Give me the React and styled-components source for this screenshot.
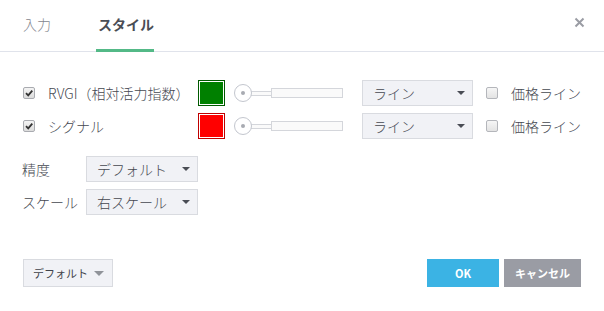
import React from "react";
import styled, { createGlobalStyle } from "styled-components";

const Global = createGlobalStyle`
  html, body { margin: 0; padding: 0; background: #fff; }
  body { font-family: "Noto Sans CJK JP", "Noto Sans", sans-serif; color: #454850; font-weight: 300; }
  * { box-sizing: border-box; }
`;

const Dialog = styled.div`
  width: 604px;
  height: 311px;
  display: flex;
  flex-direction: column;
  background: #fff;
`;

const Header = styled.div`
  height: 52px;
  border-bottom: 1px solid #e0e3eb;
  display: flex;
  align-items: stretch;
  padding: 0 19px 0 23px;
`;

const Tab = styled.div`
  font-size: 14px;
  font-weight: ${(p) => (p.$active ? 700 : 300)};
  color: ${(p) => (p.$active ? "#4a4d55" : "#83868e")};
  margin-right: 47px;
  display: flex;
  align-items: center;
  padding-bottom: 3px;
  position: relative;
  &::after {
    content: "";
    display: ${(p) => (p.$active ? "block" : "none")};
    position: absolute;
    left: -2px;
    right: 0;
    bottom: -1px;
    height: 3px;
    background: #53b987;
  }
`;

const Close = styled.button`
  margin-left: auto;
  align-self: flex-start;
  margin-top: 17px;
  width: 11px;
  height: 11px;
  padding: 0;
  border: 0;
  background: none;
  display: flex;
`;

const Body = styled.div`
  flex: 1;
  padding: 28px 23px 0 23px;
  display: flex;
  flex-direction: column;
`;

const PlotRow = styled.div`
  display: flex;
  align-items: center;
  height: 26px;
  margin-bottom: 7px;
`;

const Box = styled.span`
  width: 12px;
  height: 12px;
  border: 1px solid #a9abb0;
  border-radius: 2px;
  background: linear-gradient(#f4f4f4, #dcdcdc);
  display: inline-flex;
  align-items: center;
  justify-content: center;
  flex-shrink: 0;
`;

const PlotLabel = styled.span`
  font-size: 14px;
  width: 150px;
  margin-left: 13px;
  white-space: nowrap;
`;

const Swatch = styled.span`
  width: 27px;
  height: 26px;
  border: 1px solid ${(p) => p.$border};
  padding: 1px;
  background: #fff;
  display: flex;
  flex-shrink: 0;
  &::before {
    content: "";
    flex: 1;
    background: ${(p) => p.$color};
  }
`;

const Slider = styled.div`
  width: 109px;
  margin-left: 9px;
  display: flex;
  align-items: center;
  height: 18px;
  flex-shrink: 0;
`;

const Thumb = styled.span`
  width: 18px;
  height: 18px;
  border-radius: 50%;
  border: 1px solid #c3c6ce;
  background: #fff;
  display: flex;
  align-items: center;
  justify-content: center;
  flex-shrink: 0;
  position: relative;
  z-index: 1;
  &::before {
    content: "";
    width: 4px;
    height: 4px;
    border-radius: 50%;
    background: #a8abb2;
  }
`;

const TrackThin = styled.span`
  width: 20px;
  height: 5px;
  margin-left: -1px;
  border: 1px solid #d4d6db;
  border-left: 0;
  border-right: 0;
  background: #fafafa;
  flex-shrink: 0;
`;

const TrackWide = styled.span`
  flex: 1;
  height: 10px;
  border: 1px solid #d4d6db;
  background: #fafafa;
`;

const Select = styled.div`
  width: ${(p) => p.$w}px;
  height: 26px;
  margin-left: ${(p) => p.$ml || 0}px;
  background: #f1f2f6;
  border: 1px solid #d9dbe0;
  display: flex;
  align-items: center;
  padding: 0 7px 0 10px;
  font-size: 14px;
  white-space: nowrap;
  flex-shrink: 0;
`;

const Arrow = styled.span`
  margin-left: auto;
  width: 0;
  height: 0;
  border-left: ${(p) => p.$s || 4}px solid transparent;
  border-right: ${(p) => p.$s || 4}px solid transparent;
  border-top: ${(p) => p.$s || 4}px solid ${(p) => p.$c || "#4a4d55"};
`;

const PriceBox = styled(Box)`
  margin-left: 13px;
  background: linear-gradient(#f6f6f6, #e3e3e3);
  border-color: #b4b6bb;
`;

const PriceLabel = styled.span`
  margin-left: 13px;
  font-size: 14px;
  white-space: nowrap;
`;

const FieldRow = styled.div`
  display: flex;
  align-items: center;
  height: 26px;
  margin-top: ${(p) => p.$mt}px;
`;

const FieldLabel = styled.span`
  width: 64px;
  font-size: 14px;
  white-space: nowrap;
  margin-left: -1px;
`;

const Footer = styled.div`
  display: flex;
  align-items: center;
  padding: 0 23px;
  height: 28px;
  margin-bottom: 24px;
  gap: 5px;
`;

const DefaultBtn = styled.div`
  width: 90px;
  height: 28px;
  background: #f1f2f6;
  border: 1px solid #d9dbe0;
  display: flex;
  align-items: center;
  padding: 0 8px 0 9px;
  font-size: 11px;
  font-weight: 400;
  color: #3f424a;
  margin-right: auto;
`;

const Btn = styled.button`
  width: ${(p) => p.$w}px;
  height: 28px;
  border: 0;
  padding: 0;
  background: ${(p) => p.$bg};
  color: #fff;
  font-family: inherit;
  font-size: 11px;
  font-weight: 700;
`;

const Check = () => (
  <svg width="10" height="10" viewBox="0 0 10 10">
    <path d="M2 5.2 L4.2 7.4 L8.3 2.6" fill="none" stroke="#333" strokeWidth="1.8" />
  </svg>
);

const plots = [
  { name: "RVGI（相対活力指数）", color: "#008000", border: "#005a00" },
  { name: "シグナル", color: "#ff0000", border: "#c00000" },
];

export default function App() {
  return (
    <>
      <Global />
      <Dialog>
        <Header>
          <Tab>入力</Tab>
          <Tab $active>スタイル</Tab>
          <Close aria-label="close">
            <svg width="11" height="11" viewBox="0 0 11 11">
              <path d="M1.5 1.5 L9.5 9.5 M9.5 1.5 L1.5 9.5" stroke="#9a9ca4" strokeWidth="2" />
            </svg>
          </Close>
        </Header>
        <Body>
          {plots.map((p) => (
            <PlotRow key={p.name}>
              <Box>
                <Check />
              </Box>
              <PlotLabel>{p.name}</PlotLabel>
              <Swatch $color={p.color} $border={p.border} />
              <Slider>
                <Thumb />
                <TrackThin />
                <TrackWide />
              </Slider>
              <Select $w={111} $ml={19}>
                ライン
                <Arrow />
              </Select>
              <PriceBox />
              <PriceLabel>価格ライン</PriceLabel>
            </PlotRow>
          ))}
          <FieldRow $mt={10}>
            <FieldLabel>精度</FieldLabel>
            <Select $w={112}>
              デフォルト
              <Arrow />
            </Select>
          </FieldRow>
          <FieldRow $mt={7}>
            <FieldLabel>スケール</FieldLabel>
            <Select $w={112}>
              右スケール
              <Arrow />
            </Select>
          </FieldRow>
        </Body>
        <Footer>
          <DefaultBtn>
            デフォルト
            <Arrow $c="#909399" $s={5} />
          </DefaultBtn>
          <Btn $w={72} $bg="#3bb3e4">OK</Btn>
          <Btn $w={77} $bg="#9a9ca4">キャンセル</Btn>
        </Footer>
      </Dialog>
    </>
  );
}
